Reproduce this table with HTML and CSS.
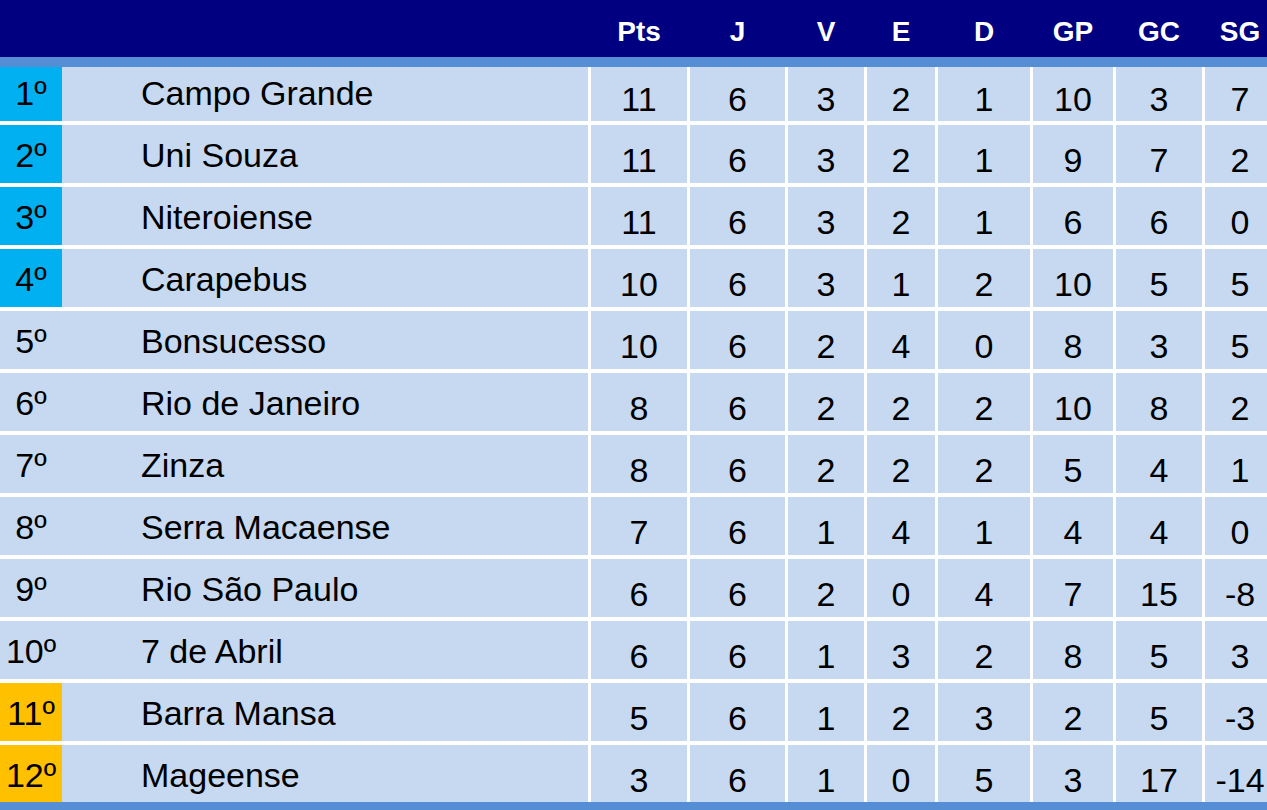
FILE: index.html
```html
<!DOCTYPE html>
<html lang="pt">
<head>
<meta charset="utf-8">
<title>Classificação</title>
<link rel="stylesheet" href="styles.css">
</head>
<body>
<div class="table">
  <div class="head">
    <div class="hc"></div>
    <div class="hc"></div>
    <div class="hc">Pts</div>
    <div class="hc">J</div>
    <div class="hc">V</div>
    <div class="hc">E</div>
    <div class="hc">D</div>
    <div class="hc">GP</div>
    <div class="hc">GC</div>
    <div class="hc">SG</div>
  </div>
  <div class="band"></div>
  <div class="row first"><div class="pos top">1º</div><div class="name">Campo Grande</div><div class="num">11</div><div class="num">6</div><div class="num">3</div><div class="num">2</div><div class="num">1</div><div class="num">10</div><div class="num">3</div><div class="num">7</div></div>
  <div class="row"><div class="pos top">2º</div><div class="name">Uni Souza</div><div class="num">11</div><div class="num">6</div><div class="num">3</div><div class="num">2</div><div class="num">1</div><div class="num">9</div><div class="num">7</div><div class="num">2</div></div>
  <div class="row"><div class="pos top">3º</div><div class="name">Niteroiense</div><div class="num">11</div><div class="num">6</div><div class="num">3</div><div class="num">2</div><div class="num">1</div><div class="num">6</div><div class="num">6</div><div class="num">0</div></div>
  <div class="row"><div class="pos top">4º</div><div class="name">Carapebus</div><div class="num">10</div><div class="num">6</div><div class="num">3</div><div class="num">1</div><div class="num">2</div><div class="num">10</div><div class="num">5</div><div class="num">5</div></div>
  <div class="row"><div class="pos">5º</div><div class="name">Bonsucesso</div><div class="num">10</div><div class="num">6</div><div class="num">2</div><div class="num">4</div><div class="num">0</div><div class="num">8</div><div class="num">3</div><div class="num">5</div></div>
  <div class="row"><div class="pos">6º</div><div class="name">Rio de Janeiro</div><div class="num">8</div><div class="num">6</div><div class="num">2</div><div class="num">2</div><div class="num">2</div><div class="num">10</div><div class="num">8</div><div class="num">2</div></div>
  <div class="row"><div class="pos">7º</div><div class="name">Zinza</div><div class="num">8</div><div class="num">6</div><div class="num">2</div><div class="num">2</div><div class="num">2</div><div class="num">5</div><div class="num">4</div><div class="num">1</div></div>
  <div class="row"><div class="pos">8º</div><div class="name">Serra Macaense</div><div class="num">7</div><div class="num">6</div><div class="num">1</div><div class="num">4</div><div class="num">1</div><div class="num">4</div><div class="num">4</div><div class="num">0</div></div>
  <div class="row"><div class="pos">9º</div><div class="name">Rio São Paulo</div><div class="num">6</div><div class="num">6</div><div class="num">2</div><div class="num">0</div><div class="num">4</div><div class="num">7</div><div class="num">15</div><div class="num">-8</div></div>
  <div class="row"><div class="pos">10º</div><div class="name">7 de Abril</div><div class="num">6</div><div class="num">6</div><div class="num">1</div><div class="num">3</div><div class="num">2</div><div class="num">8</div><div class="num">5</div><div class="num">3</div></div>
  <div class="row"><div class="pos bottom">11º</div><div class="name">Barra Mansa</div><div class="num">5</div><div class="num">6</div><div class="num">1</div><div class="num">2</div><div class="num">3</div><div class="num">2</div><div class="num">5</div><div class="num">-3</div></div>
  <div class="row last"><div class="pos bottom">12º</div><div class="name">Mageense</div><div class="num">3</div><div class="num">6</div><div class="num">1</div><div class="num">0</div><div class="num">5</div><div class="num">3</div><div class="num">17</div><div class="num">-14</div></div>
  <div class="band"></div>
</div>
</body>
</html>
```

FILE: styles.css
```css
html, body {
  margin: 0;
  padding: 0;
  background: #ffffff;
  overflow: hidden;
}

.table {
  width: 1275px;
  font-family: "Liberation Sans", Arial, sans-serif;
  color: #000000;
}

.head,
.row {
  display: grid;
  grid-template-columns: 62px 526px 99px 98px 79px 71px 95px 83px 89px 73px;
}

.head {
  background: #000080;
  height: 57px;
}

.hc {
  color: #ffffff;
  font-weight: bold;
  font-size: 28px;
  line-height: 32px;
  padding-top: 16px;
  text-align: center;
}

.hc:nth-child(n+3) {
  padding-left: 3px;
}

.band {
  height: 10px;
  background: #558ed5;
}

.row {
  background: #c6d9f1;
  height: 58px;
  border-bottom: 4px solid #ffffff;
  font-size: 34px;
  line-height: 38px;
}

.row.first {
  height: 54px;
}

.row.last {
  height: 57px;
  border-bottom: none;
}

.pos {
  text-align: center;
  padding-top: 11px;
}

.pos.top {
  background: #00b0f0;
}

.pos.bottom {
  background: #ffc000;
}

.name {
  padding-top: 11px;
  padding-left: 79px;
  white-space: nowrap;
}

.num {
  border-left: 3px solid #ffffff;
  text-align: center;
  padding-top: 16px;
}

.row.first .pos,
.row.first .name {
  padding-top: 7px;
}

.row.first .num {
  padding-top: 13px;
}
```
